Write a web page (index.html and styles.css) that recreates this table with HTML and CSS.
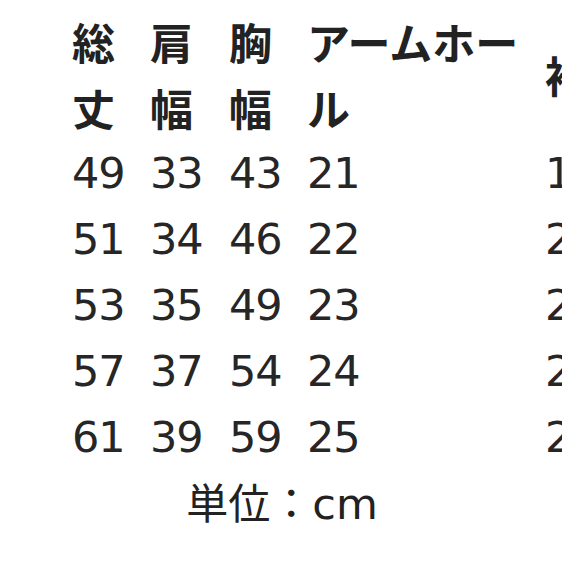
FILE: index.html
```html
<!DOCTYPE html>
<html lang="ja">
<head>
<meta charset="utf-8">
<link rel="stylesheet" href="styles.css">
</head>
<body>
<div class="chart">
  <div class="grid">
    <div class="head">総丈</div>
    <div class="head">肩幅</div>
    <div class="head">胸幅</div>
    <div class="head">アームホール</div>
    <div class="head mid">袖丈</div>

    <div class="num">49</div><div class="num">33</div><div class="num">43</div><div class="num">21</div><div class="num">19</div>
    <div class="num">51</div><div class="num">34</div><div class="num">46</div><div class="num">22</div><div class="num">20</div>
    <div class="num">53</div><div class="num">35</div><div class="num">49</div><div class="num">23</div><div class="num">21</div>
    <div class="num">57</div><div class="num">37</div><div class="num">54</div><div class="num">24</div><div class="num">22</div>
    <div class="num">61</div><div class="num">39</div><div class="num">59</div><div class="num">25</div><div class="num">23</div>
  </div>
  <div class="unit"><span class="jp">単位：</span><span class="lat">cm</span></div>
</div>
</body>
</html>
```
FILE: styles.css
```css
html, body {
  margin: 0;
  padding: 0;
  background: #ffffff;
}
body {
  width: 562px;
  height: 562px;
  overflow: hidden;
  color: #222222;
}
.chart {
  padding-top: 8px;
}
.grid {
  display: grid;
  grid-template-columns: 78px 79px 78px 238px 120px;
  padding-left: 72px;
  width: 700px;
}
.head {
  font-family: "Noto Sans CJK JP", sans-serif;
  font-weight: 700;
  font-size: 43px;
  line-height: 66px;
  word-break: break-all;
}
.head.mid {
  align-self: center;
  white-space: nowrap;
}
.num {
  font-family: "DejaVu Sans", sans-serif;
  font-size: 43px;
  line-height: 66px;
  letter-spacing: -1px;
  color: #262626;
}
.unit {
  text-align: center;
  line-height: 62px;
  margin-left: 2px;
}
.unit .jp {
  font-family: "Noto Sans CJK JP", sans-serif;
  font-size: 42px;
}
.unit .lat {
  font-family: "DejaVu Sans", sans-serif;
  font-size: 43px;
}
```
